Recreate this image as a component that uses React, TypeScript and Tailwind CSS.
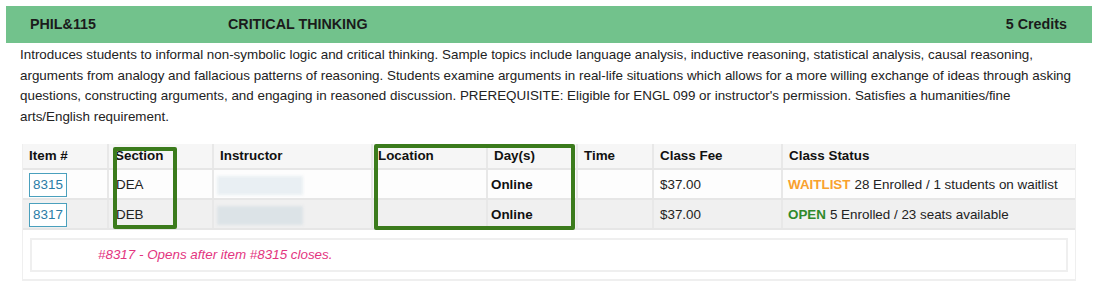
import React from "react";

const COLS = "grid grid-cols-[86px_105px_159px_115px_90px_76px_129px_1fr]";

const rows = [
  {
    item: "8315",
    section: "DEA",
    blur: "bg-[#e9eff3]",
    fee: "$37.00",
    status: "WAITLIST",
    statusColor: "text-[#f9a12e]",
    detail: "28 Enrolled / 1 students on waitlist",
    bg: "bg-[#fdfdfd]",
  },
  {
    item: "8317",
    section: "DEB",
    blur: "bg-[#dce3e7]",
    fee: "$37.00",
    status: "OPEN",
    statusColor: "text-[#2f8a2b]",
    detail: "5 Enrolled / 23 seats available",
    bg: "bg-[#f0f0f0]",
  },
];

const headers = ["Item #", "Section", "Instructor", "Location", "Day(s)", "Time", "Class Fee", "Class Status"];

export default function App() {
  return (
    <div className="w-[1110px] h-[291px] bg-white text-[#222] font-['Liberation_Sans',Arial,sans-serif] overflow-hidden pt-[6px]">
      {/* course header */}
      <div className="ml-[6px] w-[1086px] h-[37px] bg-[#72c28c] flex items-center pl-[24px] pr-[25px] text-[14.3px] font-bold text-[#1b1b1b]">
        <div className="w-[198px]">PHIL&amp;115</div>
        <div className="flex-1">CRITICAL THINKING</div>
        <div>5 Credits</div>
      </div>

      <p className="mt-[2px] pl-[20px] text-[13.4px] leading-[20.5px] whitespace-nowrap">
        Introduces students to informal non-symbolic logic and critical thinking. Sample topics include language analysis, inductive reasoning, statistical analysis, causal reasoning,
        <br />
        arguments from analogy and fallacious patterns of reasoning. Students examine arguments in real-life situations which allows for a more willing exchange of ideas through asking
        <br />
        questions, constructing arguments, and engaging in reasoned discussion. PREREQUISITE: Eligible for ENGL 099 or instructor's permission. Satisfies a humanities/fine
        <br />
        arts/English requirement.
      </p>

      {/* sections table */}
      <div className="relative ml-[22px] mt-[17px] w-[1054px] border-l border-r border-b-2 border-[#efefef] text-[13.4px]">
        <div className={`${COLS} h-[26px] bg-[#f6f6f6] border-b-2 border-[#e6e6e6] font-bold text-[#111]`}>
          {headers.map((h, i) => (
            <div
              key={h}
              className={`flex items-center ${i === 3 ? "pl-[5px]" : "pl-[6px]"} ${i < headers.length - 1 ? "border-r-2 border-[#e8e8e8]" : ""}`}
            >
              {h}
            </div>
          ))}
        </div>

        {rows.map((r) => (
          <div key={r.item} className={`${COLS} h-[30px] ${r.bg} border-b-2 border-[#e6e6e6]`}>
            <div className="flex items-center pt-[2px] pl-[6px] border-r-2 border-[#e8e8e8]">
              <span className="h-[24px] w-[38px] border border-[#4aa0bd] bg-white text-[#2a7ca6] flex items-center justify-center">
                {r.item}
              </span>
            </div>
            <div className="flex items-center pt-[2px] pl-[7px] border-r-2 border-[#e8e8e8]">{r.section}</div>
            <div className="flex items-center pt-[2px] pl-[3px] border-r-2 border-[#e8e8e8]">
              <div className={`h-[19px] w-[86px] ${r.blur} blur-[1.5px]`} />
            </div>
            <div className="border-r-2 border-[#e8e8e8]" />
            <div className="flex items-center pt-[2px] pl-[3px] font-bold text-[#111] border-r-2 border-[#e8e8e8]">Online</div>
            <div className="border-r-2 border-[#e8e8e8]" />
            <div className="flex items-center pt-[2px] pl-[6px] border-r-2 border-[#e8e8e8]">{r.fee}</div>
            <div className="flex items-center pt-[2px] pl-[5px]">
              <span className={`font-bold ${r.statusColor}`}>{r.status}</span>
              <span className="ml-[4px]">{r.detail}</span>
            </div>
          </div>
        ))}

        <div className="px-[7px] pt-[8px] pb-[7px] bg-white">
          <div className="h-[34px] border-2 border-[#efefef] flex items-center pl-[66px] italic text-[#e3357f]">
            #8317 - Opens after item #8315 closes.
          </div>
        </div>

        {/* highlight annotations */}
        <div className="absolute left-[90px] top-[3px] w-[64px] h-[82px] border-4 border-[#3b7b1c] rounded-[2px]" />
        <div className="absolute left-[351px] top-0 w-[201px] h-[86px] border-4 border-[#3b7b1c] rounded-[2px]" />
      </div>
    </div>
  );
}
